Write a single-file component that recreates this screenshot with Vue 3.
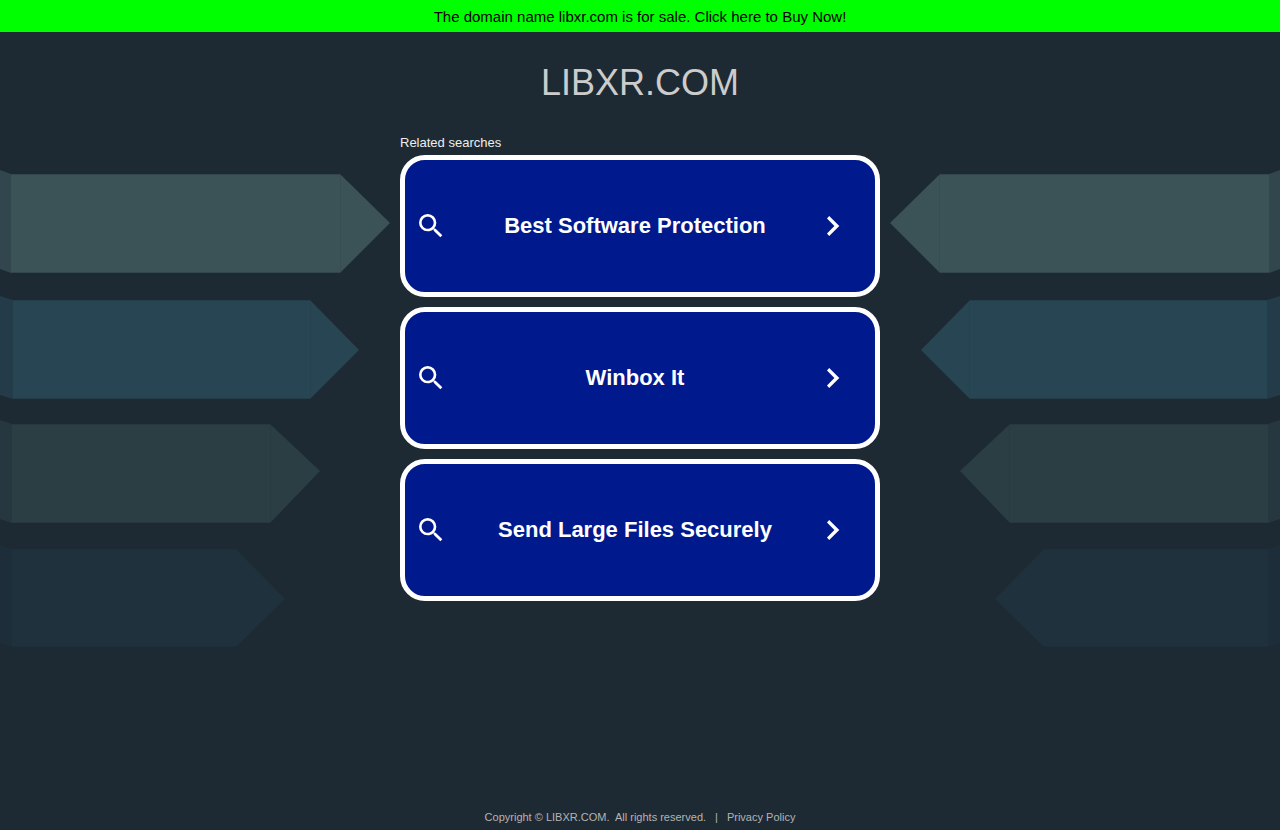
<script setup>
const searches = ['Best Software Protection', 'Winbox It', 'Send Large Files Securely']

const ribbons = [
  { top: 174, bottom: 273, fold: 11, shoulder: 340, tip: 390, mid: 223, face: '#3b5357', side: '#32464d' },
  { top: 300, bottom: 399, fold: 13, shoulder: 310, tip: 359, mid: 350, face: '#284553', side: '#243c4a' },
  { top: 424, bottom: 523, fold: 12, shoulder: 270, tip: 320, mid: 471, face: '#2b3e44', side: '#26373f' },
  { top: 549, bottom: 647, fold: 12, shoulder: 236, tip: 285, mid: 599, face: '#1f313d', side: '#1e2d3a' },
]

const body = (r) => `${r.fold},${r.top} ${r.shoulder},${r.top} ${r.tip},${r.mid} ${r.shoulder},${r.bottom} ${r.fold},${r.bottom}`
const flap = (r) => `0,${r.top - 4} ${r.fold},${r.top} ${r.fold},${r.bottom} 0,${r.bottom - 4}`
</script>

<template>
  <div class="page">
    <svg class="backdrop" width="1280" height="660" viewBox="0 0 1280 660" aria-hidden="true">
      <g v-for="side in 2" :key="side" :transform="side === 2 ? 'translate(1280 0) scale(-1 1)' : null">
        <g v-for="r in ribbons" :key="r.top">
          <polygon :points="flap(r)" :fill="r.side" />
          <polygon :points="body(r)" :fill="r.face" />
          <path
            :d="`M${r.fold} ${r.top + 0.5}H${r.shoulder}M${r.fold} ${r.bottom - 0.5}H${r.shoulder}`"
            stroke="#1e2a33"
            stroke-opacity=".3"
          />
          <path :d="`M${r.shoulder + 0.5} ${r.top}V${r.bottom}`" stroke="#1e2a33" stroke-opacity=".12" />
        </g>
      </g>
    </svg>

    <a class="banner" href="#buy">The domain name libxr.com is for sale. Click here to Buy Now!</a>

    <main class="content">
      <h1>LIBXR.COM</h1>
      <nav class="related" aria-labelledby="related-title">
        <h2 id="related-title">Related searches</h2>
        <a v-for="term in searches" :key="term" class="card" href="#search">
          <svg class="icon" viewBox="0 0 24 24" aria-hidden="true">
            <path d="M15.500 14h-.79l-.28-.27A6.471 6.471 0 0 0 16 9.500 6.500 6.500 0 1 0 9.500 16c1.610 0 3.090-.59 4.230-1.570l.27.28v.79l5 4.990L20.490 19l-4.990-5zm-6 0C7.010 14 5 11.990 5 9.500S7.010 5 9.500 5 14 7.010 14 9.500 11.990 14 9.500 14z" />
          </svg>
          <span class="term">{{ term }}</span>
          <svg class="arrow" viewBox="0 0 24 24" aria-hidden="true">
            <path d="M6.200 2.100L4 4.400 11.400 12 4 19.600l2.200 2.300L16.300 12z" />
          </svg>
        </a>
      </nav>
    </main>

    <footer class="footer">
      <span class="copyright">Copyright © LIBXR.COM.&nbsp; All rights reserved.</span>
      <span>|</span>
      <a href="#privacy">Privacy Policy</a>
    </footer>
  </div>
</template>

<style>
body {
  margin: 0;
  background: #1e2a33;
}
</style>

<style scoped>
.page {
  position: relative;
  display: flex;
  flex-direction: column;
  min-height: 100vh;
  overflow: hidden;
  background: #1e2a33;
  font-family: "Liberation Sans", Arial, sans-serif;
}
.backdrop {
  position: absolute;
  top: 0;
  left: 50%;
  transform: translateX(-50%);
}
.banner {
  position: relative;
  padding: 8px 8px 6px;
  background: #00ff00;
  color: #000;
  font-size: 15px;
  line-height: 18px;
  text-align: center;
  text-decoration: none;
}
.content {
  position: relative;
  flex: 1;
}
h1 {
  margin: 31px 0;
  color: #ccc;
  font-size: 36px;
  font-weight: 400;
  line-height: 40px;
  text-align: center;
}
.related {
  display: flex;
  flex-direction: column;
  gap: 10px;
  box-sizing: border-box;
  width: 100%;
  max-width: 480px;
  margin: 0 auto;
}
h2 {
  margin: 0 0 -6px;
  color: #eee;
  font-size: 13px;
  font-weight: 400;
  line-height: 17px;
}
.card {
  display: flex;
  align-items: center;
  box-sizing: border-box;
  min-height: 142px;
  padding: 0 28px 0 10px;
  border: 5px solid #fff;
  border-radius: 25px;
  background: #00198c;
  color: #fff;
  text-decoration: none;
}
.card svg {
  flex: none;
  fill: #fff;
}
.icon {
  width: 32px;
  height: 32px;
}
.arrow {
  width: 24px;
  height: 24px;
}
.term {
  flex: 1;
  font-size: 22px;
  font-weight: 700;
  line-height: 26px;
  text-align: center;
}
.footer {
  position: relative;
  display: flex;
  justify-content: center;
  gap: 9px;
  padding: 24px 0 6px;
  color: #b4b4b4;
  font-size: 11px;
  line-height: 13px;
}
.footer a {
  color: inherit;
  text-decoration: none;
}
</style>
